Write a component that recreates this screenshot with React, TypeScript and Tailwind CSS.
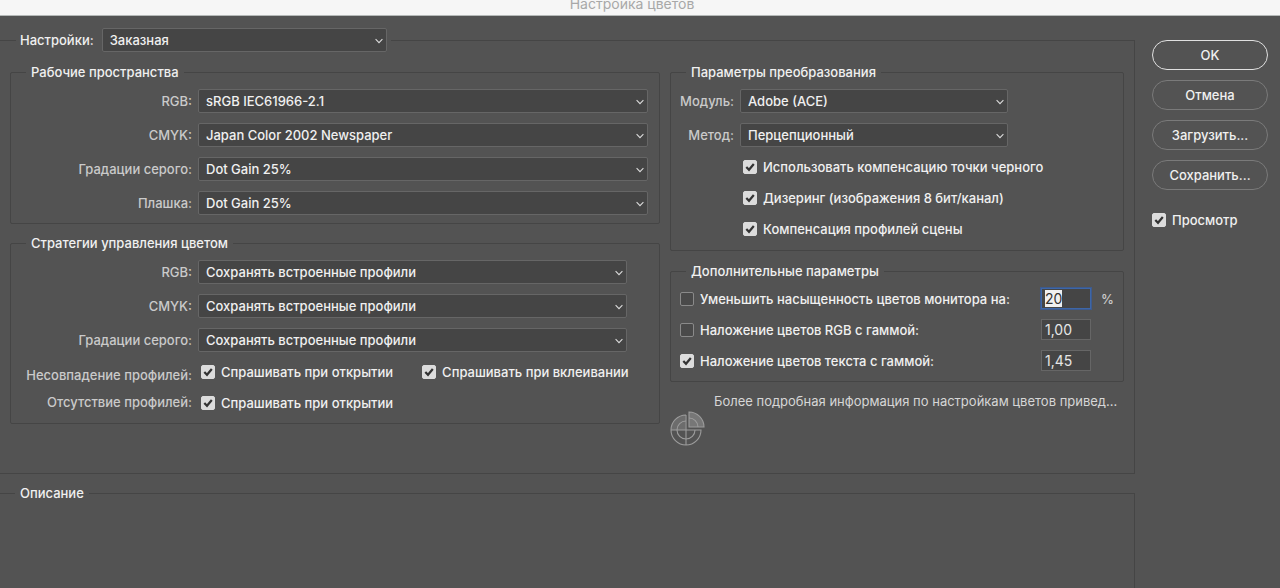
import { useEffect, useId, useRef, type ReactNode } from "react";

const legendClass = "ml-[15px] h-5 px-[5px] leading-5 font-medium text-[#f0f0f0]";
const groupClass = "min-w-0 rounded-[2px] border border-[#454545]";

function Group({ title, className, children }: { title: string; className: string; children: ReactNode }) {
  return (
    <fieldset className={`${groupClass} ${className}`}>
      <legend className={legendClass}>{title}</legend>
      {children}
    </fieldset>
  );
}

function Dropdown({ id, value }: { id: string; value: string }) {
  return (
    <div className="relative min-w-0 flex-1">
      <select
        id={id}
        className="block h-6 w-full appearance-none rounded-[2px] border border-[#666] bg-[#454545] pl-[7px] pr-6 font-medium text-[#f0f0f0] outline-none"
      >
        <option>{value}</option>
      </select>
      <svg
        className="pointer-events-none absolute top-[9px] right-1 h-2 w-2"
        viewBox="0 0 8 8"
        fill="none"
        stroke="#dcdcdc"
        strokeWidth="1.1"
      >
        <path d="M0.6 2.2 4 5.6 7.4 2.2" />
      </svg>
    </div>
  );
}

function SelectRow({ label, value, labelClass }: { label: string; value: string; labelClass: string }) {
  const id = useId();
  return (
    <div className="flex items-center gap-1.5">
      <label htmlFor={id} className={`shrink-0 text-right font-medium text-[#cacaca] ${labelClass}`}>
        {label}
      </label>
      <Dropdown id={id} value={value} />
    </div>
  );
}

function Check({ label, checked = false }: { label: string; checked?: boolean }) {
  return (
    <label className="flex h-5 items-center gap-1.5 font-medium whitespace-nowrap text-[#f0f0f0]">
      <span className="relative block h-3.5 w-3.5 shrink-0">
        <input
          type="checkbox"
          defaultChecked={checked}
          className="peer block h-3.5 w-3.5 appearance-none rounded-[2px] border border-[#8a8a8a] bg-[#4a4a4a] checked:border-[#dcdcdc] checked:bg-[#dcdcdc]"
        />
        <svg
          className="pointer-events-none absolute inset-0 hidden peer-checked:block"
          viewBox="0 0 14 14"
          fill="none"
          stroke="#333"
          strokeWidth="2.2"
        >
          <path d="M3.3 7 6 9.8 10.8 4" />
        </svg>
      </span>
      {label}
    </label>
  );
}

function NumberField({ label, value, selected = false }: { label: string; value: string; selected?: boolean }) {
  const ref = useRef<HTMLInputElement>(null);
  useEffect(() => {
    if (selected) {
      ref.current?.focus();
      ref.current?.select();
    }
  }, [selected]);
  return (
    <input
      ref={ref}
      aria-label={label}
      defaultValue={value}
      className="h-[21px] w-[50px] shrink-0 border border-[#666] bg-[#454545] px-[3px] text-sm text-[#e6e6e6] outline-none selection:bg-[#f0f0f0] selection:text-[#333] focus:border-[#3d66a8] focus:ring-1 focus:ring-[#3d5a8c]"
    />
  );
}

interface ParamRowProps {
  label: string;
  value: string;
  checked?: boolean;
  unit?: string;
  selected?: boolean;
}

function ParamRow({ label, value, checked, unit, selected }: ParamRowProps) {
  return (
    <div className="flex h-[21px] items-center">
      <Check label={label} checked={checked} />
      <div className="ml-auto flex items-center gap-2.5">
        <NumberField label={label} value={value} selected={selected} />
        <span className="w-3 font-medium text-[#cacaca]">{unit}</span>
      </div>
    </div>
  );
}

function ColorWheel() {
  return (
    <svg className="h-[35px] w-[35px]" viewBox="0 0 35 35" fill="none" stroke="#9c9c9c" strokeWidth="1.1">
      <path d="M15.5 19V4A15 15 0 0 0 1 19Z" fill="#6c6c6c" stroke="none" />
      <path d="M16 4A15 15 0 1 0 31 19H1M16 4V34" />
      <path d="M16 10A9 9 0 1 0 25 19" />
      <path d="M19 1V16H34A15 15 0 0 0 19 1Z" fill="#777" />
      <path d="M19 7A9 9 0 0 1 28 16" />
    </svg>
  );
}

const buttonClass = "h-[30px] w-full rounded-full border font-medium text-[#f0f0f0]";

export default function App() {
  const presetId = useId();
  return (
    <div className="flex min-h-screen flex-col overflow-hidden bg-[#535353] font-['Inter','Liberation_Sans',sans-serif] text-[13px] leading-5">
      <header className="h-4 border-b border-[#b5b9b8] bg-[#f6f6f6] pr-4 text-center">
        <h1 className="text-sm leading-[8px] text-[#a8a8a8]">Настройка цветов</h1>
      </header>

      <div className="flex flex-1 gap-[17px] pr-3">
        <main className="flex min-w-0 flex-1 flex-col gap-[9px] pt-3">
          <fieldset className="min-w-0 border border-l-0 border-[#454545] px-2.5 pb-[27px]">
            <legend className="ml-1.5 flex h-6 items-center gap-2 px-1">
              <label htmlFor={presetId} className="font-medium text-[#f0f0f0]">
                Настройки:
              </label>
              <div className="flex w-[285px]">
                <Dropdown id={presetId} value="Заказная" />
              </div>
            </legend>

            <div className="grid grid-cols-[650fr_454fr] gap-2.5 pt-2.5">
              <div className="flex flex-col gap-[9px]">
                <Group title="Рабочие пространства" className="pt-[7px] pr-[11px] pb-2">
                  <div className="flex flex-col gap-2.5">
                    <SelectRow label="RGB:" value="sRGB IEC61966-2.1" labelClass="w-[181px]" />
                    <SelectRow label="CMYK:" value="Japan Color 2002 Newspaper" labelClass="w-[181px]" />
                    <SelectRow label="Градации серого:" value="Dot Gain 25%" labelClass="w-[181px]" />
                    <SelectRow label="Плашка:" value="Dot Gain 25%" labelClass="w-[181px]" />
                  </div>
                </Group>

                <Group title="Стратегии управления цветом" className="pt-[7px] pb-2.5">
                  <div className="flex flex-col gap-2.5 pr-8">
                    <SelectRow label="RGB:" value="Сохранять встроенные профили" labelClass="w-[181px]" />
                    <SelectRow label="CMYK:" value="Сохранять встроенные профили" labelClass="w-[181px]" />
                    <SelectRow label="Градации серого:" value="Сохранять встроенные профили" labelClass="w-[181px]" />
                  </div>
                  <div className="flex gap-[9px] pt-2.5">
                    <div className="flex w-[181px] shrink-0 flex-col gap-[7px] pt-[3px] text-right font-medium whitespace-nowrap text-[#cacaca]">
                      <span>Несовпадение профилей:</span>
                      <span>Отсутствие профилей:</span>
                    </div>
                    <div className="flex flex-col gap-[11px]">
                      <div className="flex gap-[29px]">
                        <Check label="Спрашивать при открытии" checked />
                        <Check label="Спрашивать при вклеивании" checked />
                      </div>
                      <Check label="Спрашивать при открытии" checked />
                    </div>
                  </div>
                </Group>
              </div>

              <div className="min-w-0">
                <Group title="Параметры преобразования" className="pt-[7px] pb-[11px]">
                  <div className="flex max-w-[337px] flex-col gap-2.5">
                    <SelectRow label="Модуль:" value="Adobe (ACE)" labelClass="w-[63px]" />
                    <SelectRow label="Метод:" value="Перцепционный" labelClass="w-[63px]" />
                  </div>
                  <div className="flex flex-col gap-[11px] pt-2.5 pl-[72px]">
                    <Check label="Использовать компенсацию точки черного" checked />
                    <Check label="Дизеринг (изображения 8 бит/канал)" checked />
                    <Check label="Компенсация профилей сцены" checked />
                  </div>
                </Group>

                <Group title="Дополнительные параметры" className="mt-2.5 pt-[7px] pb-2.5">
                  <div className="flex flex-col gap-2.5 pr-2.5 pl-[9px]">
                    <ParamRow label="Уменьшить насыщенность цветов монитора на:" value="20" unit="%" selected />
                    <ParamRow label="Наложение цветов RGB с гаммой:" value="1,00" />
                    <ParamRow label="Наложение цветов текста с гаммой:" value="1,45" checked />
                  </div>
                </Group>

                <p className="mt-[9px] ml-11 whitespace-nowrap text-[#d6d6d6]">
                  Более подробная информация по настройкам цветов привед...
                </p>
                <ColorWheel />
              </div>
            </div>
          </fieldset>

          <fieldset className="min-w-0 flex-1 border border-b-0 border-l-0 border-[#454545]">
            <legend className={legendClass}>Описание</legend>
          </fieldset>
        </main>

        <aside className="flex w-[116px] shrink-0 flex-col gap-2.5 pt-6">
          <button className={`${buttonClass} border-[#e0e0e0]`}>OK</button>
          <button className={`${buttonClass} border-[#7a7a7a]`}>Отмена</button>
          <button className={`${buttonClass} border-[#7a7a7a]`}>Загрузить...</button>
          <button className={`${buttonClass} border-[#7a7a7a]`}>Сохранить...</button>
          <div className="pt-2.5">
            <Check label="Просмотр" checked />
          </div>
        </aside>
      </div>
    </div>
  );
}
